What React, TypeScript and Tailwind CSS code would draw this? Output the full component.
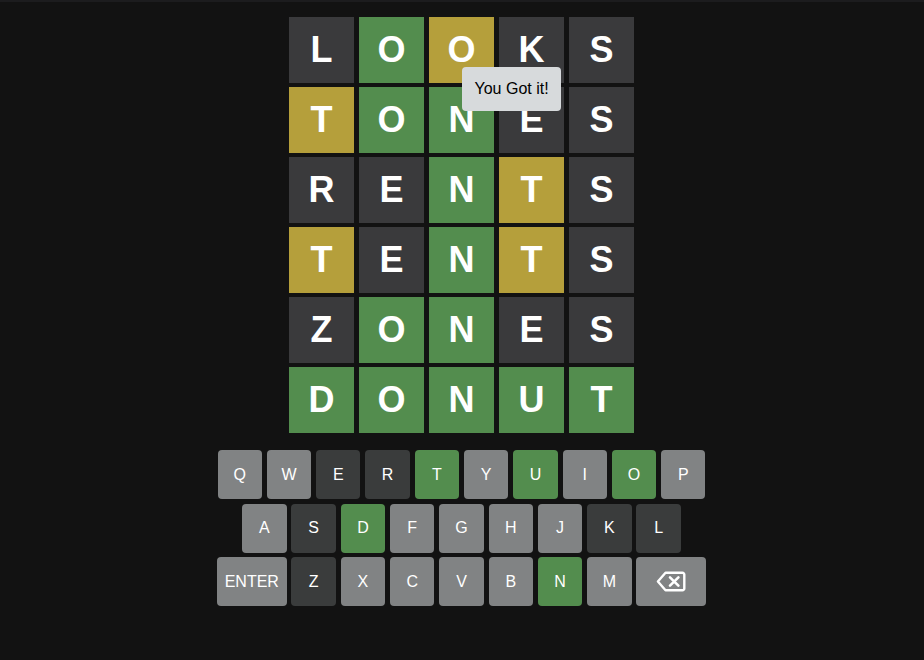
import React from "react";

type State = "g" | "y" | "d" | "u";

const rows: { word: string; states: State[] }[] = [
  { word: "LOOKS", states: ["d", "g", "y", "d", "d"] },
  { word: "TONES", states: ["y", "g", "g", "d", "d"] },
  { word: "RENTS", states: ["d", "d", "g", "y", "d"] },
  { word: "TENTS", states: ["y", "d", "g", "y", "d"] },
  { word: "ZONES", states: ["d", "g", "g", "d", "d"] },
  { word: "DONUT", states: ["g", "g", "g", "g", "g"] },
];

const tileColor: Record<State, string> = {
  g: "bg-[#538d4e]",
  y: "bg-[#b59f3b]",
  d: "bg-[#3a3a3c]",
  u: "bg-[#818384]",
};

const keyRows: { k: string; s: State }[][] = [
  [
    { k: "Q", s: "u" },
    { k: "W", s: "u" },
    { k: "E", s: "d" },
    { k: "R", s: "d" },
    { k: "T", s: "g" },
    { k: "Y", s: "u" },
    { k: "U", s: "g" },
    { k: "I", s: "u" },
    { k: "O", s: "g" },
    { k: "P", s: "u" },
  ],
  [
    { k: "A", s: "u" },
    { k: "S", s: "d" },
    { k: "D", s: "g" },
    { k: "F", s: "u" },
    { k: "G", s: "u" },
    { k: "H", s: "u" },
    { k: "J", s: "u" },
    { k: "K", s: "d" },
    { k: "L", s: "d" },
  ],
  [
    { k: "ENTER", s: "u" },
    { k: "Z", s: "d" },
    { k: "X", s: "u" },
    { k: "C", s: "u" },
    { k: "V", s: "u" },
    { k: "B", s: "u" },
    { k: "N", s: "g" },
    { k: "M", s: "u" },
    { k: "BACK", s: "u" },
  ],
];

const keyColor: Record<State, string> = {
  g: "bg-[#538d4e]",
  y: "bg-[#b59f3b]",
  d: "bg-[#3a3c3c]",
  u: "bg-[#818384]",
};

const BackspaceIcon = () => (
  <svg width="30" height="21" viewBox="0 0 30 21" fill="none">
    <path
      d="M9.5 1.8 H26.5 a1.8 1.8 0 0 1 1.8 1.8 V17.4 a1.8 1.8 0 0 1 -1.8 1.8 H9.5 L1.9 10.5 Z"
      stroke="white"
      strokeWidth={2.4}
      strokeLinejoin="round"
    />
    <path
      d="M14 6.3 L22.4 14.7 M22.4 6.3 L14 14.7"
      stroke="white"
      strokeWidth={2.6}
      strokeLinecap="round"
    />
  </svg>
);

export default function App() {
  return (
    <div className="min-h-screen bg-[#121212] font-['Liberation_Sans',Arial,sans-serif] text-white">
      <div className="h-[2px] bg-[#1c1c1e]" />
      <div className="flex flex-col items-center pt-[15px] pr-[1px]">
        {/* Board */}
        <div className="relative flex flex-col gap-y-[4px]">
          {rows.map((row, r) => (
            <div key={r} className="flex gap-x-[5px]">
              {row.word.split("").map((ch, i) => (
                <div
                  key={i}
                  className={`w-[65px] h-[66px] flex items-center justify-center text-[36px] font-bold ${tileColor[row.states[i]]}`}
                >
                  {ch}
                </div>
              ))}
            </div>
          ))}
          <div className="absolute left-[173px] top-[50px] rounded-[4px] bg-[#d7dadc] px-[12.5px] py-[10px] text-[16px] leading-[24px] text-black whitespace-nowrap">
            You Got it!
          </div>
        </div>

        {/* Keyboard */}
        <div className="mt-[17px] flex flex-col items-center gap-y-[4.6px]">
          {keyRows.map((row, r) => (
            <div key={r} className="flex gap-x-[4.9px]">
              {row.map((key) => (
                <div
                  key={key.k}
                  className={`h-[49px] flex items-center justify-center rounded-[4px] text-[16px] text-white ${
                    key.k === "ENTER" || key.k === "BACK" ? "w-[69.5px]" : "w-[44.4px]"
                  } ${keyColor[key.s]}`}
                >
                  {key.k === "BACK" ? <BackspaceIcon /> : key.k}
                </div>
              ))}
            </div>
          ))}
        </div>
      </div>
    </div>
  );
}
